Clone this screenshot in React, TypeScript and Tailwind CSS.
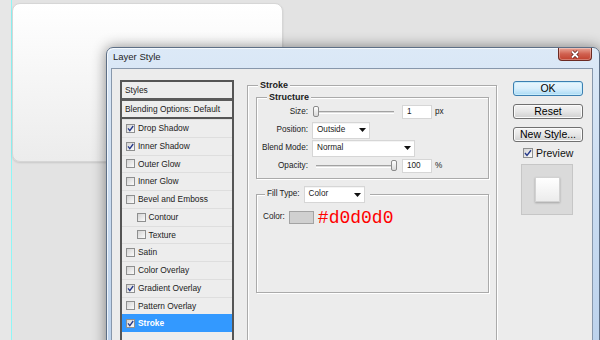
import React from "react";

type StyleRow = { label: string; checked?: boolean; indent?: boolean; active?: boolean };

const styleRows: StyleRow[] = [
  { label: "Drop Shadow", checked: true },
  { label: "Inner Shadow", checked: true },
  { label: "Outer Glow" },
  { label: "Inner Glow" },
  { label: "Bevel and Emboss" },
  { label: "Contour", indent: true },
  { label: "Texture", indent: true },
  { label: "Satin" },
  { label: "Color Overlay" },
  { label: "Gradient Overlay", checked: true },
  { label: "Pattern Overlay" },
  { label: "Stroke", checked: true, active: true },
];

function Checkbox({ checked }: { checked?: boolean }) {
  return (
    <span className="flex h-[9px] w-[9px] shrink-0 items-center justify-center border border-[#8e8f8f] bg-linear-to-br from-[#d4d4d4] to-[#fbfbfb]">
      {checked && (
        <svg width="7" height="7" viewBox="0 0 7 7">
          <path d="M1 3.4 L2.8 5.6 L6.2 1" fill="none" stroke="#25398a" strokeWidth="1.3" />
        </svg>
      )}
    </span>
  );
}

function Slider({ value }: { value: "min" | "max" }) {
  return (
    <div className="relative ml-[5px] h-[12px] w-[84px]">
      <div className="absolute top-[5px] right-[3px] left-[3px] h-[3px] border-t border-[#a2a2a2] border-b border-b-white bg-[#dcdcdc]" />
      <div
        className={
          value === "min"
            ? "absolute top-0 left-0 h-[11px] w-[6px] rounded-[2px] border border-[#8a8a8a] bg-linear-to-b from-white to-[#d8d8d8]"
            : "absolute top-0 right-0 h-[11px] w-[6px] rounded-[2px] border border-[#8a8a8a] bg-linear-to-b from-white to-[#d8d8d8]"
        }
      />
    </div>
  );
}

function Select({ label, className }: { label: string; className: string }) {
  return (
    <div
      className={`flex h-[17px] items-center border border-[#d6d6d6] bg-white pl-[4px] shadow-[inset_0_1px_0_#f4f4f4] ${className}`}
    >
      <span>{label}</span>
      <svg className="mr-[3px] ml-auto" width="7" height="4" viewBox="0 0 7 4">
        <path d="M0 0 H7 L3.5 4 Z" fill="#111" />
      </svg>
    </div>
  );
}

function NumberBox({ value }: { value: string }) {
  return (
    <div className="ml-[5px] flex h-[14px] w-[30px] items-center border border-[#d6d6d6] bg-white pl-[4px]">
      {value}
    </div>
  );
}

function Button({ label, primary }: { label: string; primary?: boolean }) {
  return (
    <button
      className={
        primary
          ? "flex h-[15px] w-[70px] items-center justify-center rounded-[3px] border border-[#3c7fb1] bg-linear-to-b from-[#eaf6fd] via-[#d9effc] to-[#a9daf5] text-[10.5px] leading-none text-black shadow-[inset_0_0_0_1px_#c8ecfb]"
          : "flex h-[15px] w-[70px] items-center justify-center rounded-[3px] border border-[#707070] bg-linear-to-b from-[#f4f4f4] via-[#e6e6e6] to-[#d0d0d0] text-[10.5px] leading-none text-black shadow-[inset_0_0_0_1px_#fbfbfb]"
      }
    >
      {label}
    </button>
  );
}

function StylesList() {
  return (
    <div className="flex h-[290px] w-[114px] shrink-0 flex-col border-2 border-[#555] bg-[#ededed] text-[8.4px] leading-none text-[#1b1b1b]">
      <div className="flex h-[19px] shrink-0 items-center border-b-[3px] border-[#5a5a5a] pl-[3px]">Styles</div>
      <div className="flex h-[18px] shrink-0 items-center border-b-2 border-[#555] pl-[3px]">
        Blending Options: Default
      </div>
      {styleRows.map((row) => (
        <div
          key={row.label}
          className={
            (row.active
              ? "bg-[#3399ff] font-bold text-white "
              : "border-t border-[#dedede] ") +
            (row.indent ? "pl-[14.5px] " : "pl-[4px] ") +
            "flex h-[17.75px] shrink-0 items-center gap-[3px]"
          }
        >
          <Checkbox checked={row.checked} />
          <span>{row.label}</span>
        </div>
      ))}
    </div>
  );
}

function StrokePanel() {
  return (
    <fieldset className="m-0 h-[270px] w-[250px] shrink-0 border border-[#aaaaaa] p-0 shadow-[inset_1px_1px_0_#fff,1px_1px_0_#fff] text-[8.2px] leading-none text-[#1b1b1b]">
      <legend className="ml-[10px] bg-[#ececec] px-[2px] text-[9px] leading-[10px] font-bold">Stroke</legend>

      <fieldset className="m-0 mt-[2px] mr-[7px] ml-[8px] border border-[#aaaaaa] p-0 pt-[1px] pb-[3px] shadow-[inset_1px_1px_0_#fff,1px_1px_0_#fff]">
        <legend className="ml-[10px] bg-[#ececec] px-[2px] text-[9px] leading-[10px] font-bold">Structure</legend>
        <div className="flex h-[18px] items-center">
          <span className="w-[51px] text-right">Size:</span>
          <Slider value="min" />
          <NumberBox value="1" />
          <span className="ml-[3px]">px</span>
        </div>
        <div className="flex h-[18px] items-center">
          <span className="w-[51px] text-right">Position:</span>
          <Select label="Outside" className="ml-[4px] w-[58px]" />
        </div>
        <div className="flex h-[18px] items-center">
          <span className="w-[51px] text-right">Blend Mode:</span>
          <Select label="Normal" className="ml-[4px] w-[103px]" />
        </div>
        <div className="flex h-[18px] items-center">
          <span className="w-[51px] text-right">Opacity:</span>
          <Slider value="max" />
          <NumberBox value="100" />
          <span className="ml-[3px]">%</span>
        </div>
      </fieldset>

      <fieldset className="m-0 mt-[7px] mr-[7px] ml-[8px] h-[107px] border border-[#aaaaaa] p-0 shadow-[inset_1px_1px_0_#fff,1px_1px_0_#fff]">
        <legend className="ml-[8px] flex items-center bg-[#ececec] pr-[5px] pl-[2px]">
          <span>Fill Type:</span>
          <Select label="Color" className="ml-[4px] w-[61px]" />
        </legend>
        <div className="mt-[8px] flex h-[13px] items-center pl-[6px]">
          <span>Color:</span>
          <span className="ml-[4px] h-[13px] w-[25px] border border-[#a3a3a3] bg-[#d0d0d0]" />
          <span className="ml-[4px] font-['Liberation_Mono','Courier_New',monospace] text-[18px] leading-none text-[#ff0000]">
            #d0d0d0
          </span>
        </div>
      </fieldset>
    </fieldset>
  );
}

function ButtonColumn() {
  return (
    <div className="ml-[16px] flex w-[70px] shrink-0 flex-col pt-[1px] text-[#111]">
      <Button label="OK" primary />
      <div className="mt-[8px]">
        <Button label="Reset" />
      </div>
      <div className="mt-[8px]">
        <Button label="New Style..." />
      </div>
      <div className="mt-[6px] flex items-center gap-[3px] pl-[10px] text-[10.5px] leading-none">
        <span className="flex h-[10px] w-[10px] items-center justify-center border border-[#8e8f8f] bg-linear-to-br from-[#d4d4d4] to-[#fbfbfb]">
          <svg width="8" height="8" viewBox="0 0 8 8">
            <path d="M1 4 L3 6.4 L7 1.2" fill="none" stroke="#25398a" strokeWidth="1.4" />
          </svg>
        </span>
        <span>Preview</span>
      </div>
      <div className="mt-[5px] ml-[8px] flex h-[51px] w-[52px] items-center justify-center border border-[#c6c6c6] bg-[#dadada]">
        <div className="h-[25px] w-[25px] border border-[#d2d2d2] bg-linear-to-b from-white to-[#ececec] shadow-[0_1px_2px_rgba(0,0,0,0.25)]" />
      </div>
    </div>
  );
}

export default function App() {
  return (
    <div className="relative h-[340px] w-[600px] overflow-hidden bg-[#e3e3e3] font-['Liberation_Sans',Arial,sans-serif]">
      <div className="absolute top-0 left-0 h-full w-[11px] bg-[#e7e7e7]" />
      <div className="absolute top-0 left-[11px] h-full w-px bg-[#8ff6f6]" />

      {/* card on the canvas behind the dialog */}
      <div className="absolute top-[3px] left-[12px] h-[159px] w-[271px] rounded-[8px] border border-[#d6d6d6] bg-linear-to-b from-white to-[#ececec] shadow-[0_1px_2px_rgba(0,0,0,0.12)]" />

      {/* Layer Style window */}
      <div className="absolute top-[47px] left-[106px] flex h-[310px] w-[494px] flex-col rounded-t-[7px] border border-[#5d6f86] bg-linear-to-b from-[#dce9f7] via-[#cadcf1] to-[#bcd2ec] shadow-[0_0_14px_rgba(0,0,0,0.45),inset_1px_1px_0_rgba(255,255,255,0.7)]">
        <div className="flex h-[20px] shrink-0 items-start">
          <span className="pt-[4px] pl-[6px] text-[9.5px] leading-none text-[#1e1e1e]">Layer Style</span>
          <div className="mr-[7px] ml-auto flex h-[13px] w-[34px] items-center justify-center rounded-b-[4px] border border-t-0 border-[#6b2a22] bg-linear-to-b from-[#e8a597] via-[#d0604f] to-[#c0402d] shadow-[inset_0_0_0_1px_rgba(255,255,255,0.3)]">
            <svg width="12" height="9" viewBox="0 0 12 9">
              <path d="M3 1.5 L9 7.5 M9 1.5 L3 7.5" stroke="#5b1c14" strokeWidth="3.2" />
              <path d="M3 1.5 L9 7.5 M9 1.5 L3 7.5" stroke="#fff" strokeWidth="1.8" />
            </svg>
          </div>
        </div>
        <div className="mr-[6px] ml-[4px] flex flex-1 items-start border border-[#8797ab] bg-[#ececec] pt-[11px] pl-[8px]">
          <StylesList />
          <div className="ml-[13px]">
            <StrokePanel />
          </div>
          <ButtonColumn />
        </div>
      </div>
    </div>
  );
}
